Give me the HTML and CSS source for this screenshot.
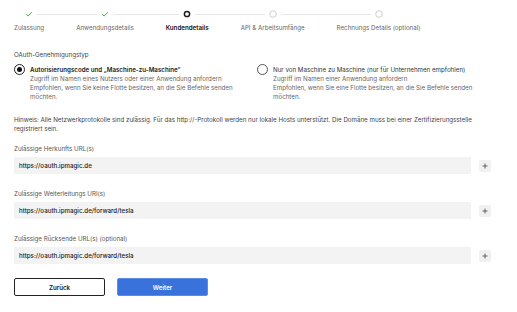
FILE: index.html
```html
<!DOCTYPE html>
<html lang="de">
  <head>
    <meta charset="UTF-8" />
    <meta name="viewport" content="width=device-width, initial-scale=1.0" />
    <title>Kundendetails</title>
    <link rel="stylesheet" href="styles.css">
  </head>
  <body>
    <div class="page">
      <ol class="stepper">
        <li class="step done">
          <div class="step-track">
            <span class="line"></span>
            <svg class="step-icon" viewBox="0 0 8 8"><path d="M1.2 4.2 L3.2 6 L6.9 2.2" fill="none" stroke="#3bb54a" stroke-width="1" /></svg>
            <span class="line"></span>
          </div>
          <span class="step-label">Zulassung</span>
        </li>
        <li class="step done">
          <div class="step-track">
            <span class="line"></span>
            <svg class="step-icon" viewBox="0 0 8 8"><path d="M1.2 4.2 L3.2 6 L6.9 2.2" fill="none" stroke="#3bb54a" stroke-width="1" /></svg>
            <span class="line"></span>
          </div>
          <span class="step-label">Anwendungsdetails</span>
        </li>
        <li class="step active">
          <div class="step-track">
            <span class="line"></span>
            <svg class="step-icon" viewBox="0 0 8 8"><circle cx="4" cy="4" r="2.6" fill="none" stroke="#1f1f1f" stroke-width="1.5" /></svg>
            <span class="line"></span>
          </div>
          <span class="step-label">Kundendetails</span>
        </li>
        <li class="step">
          <div class="step-track">
            <span class="line"></span>
            <svg class="step-icon" viewBox="0 0 8 8"><circle cx="4" cy="4" r="3.3" fill="none" stroke="#c4c4c4" stroke-width="0.8" /></svg>
            <span class="line"></span>
          </div>
          <span class="step-label">API &amp; Arbeitsumfänge</span>
        </li>
        <li class="step">
          <div class="step-track">
            <span class="line"></span>
            <svg class="step-icon" viewBox="0 0 8 8"><circle cx="4" cy="4" r="3.3" fill="none" stroke="#c4c4c4" stroke-width="0.8" /></svg>
            <span class="line"></span>
          </div>
          <span class="step-label">Rechnungs Details (optional)</span>
        </li>
      </ol>

      <p class="section-title">OAuth-Genehmigungstyp</p>
      <div class="grant-options">
        <label class="grant">
          <span class="radio checked"></span>
          <span class="grant-text">
            <span class="grant-title">Autorisierungscode und „Maschine-zu-Maschine“</span>
            <span class="grant-desc">Zugriff im Namen eines Nutzers oder einer Anwendung anfordern</span>
            <span class="grant-desc">Empfohlen, wenn Sie keine Flotte besitzen, an die Sie Befehle senden möchten.</span>
          </span>
        </label>
        <label class="grant">
          <span class="radio"></span>
          <span class="grant-text">
            <span class="grant-title light">Nur von Maschine zu Maschine (nur für Unternehmen empfohlen)</span>
            <span class="grant-desc">Zugriff im Namen einer Anwendung anfordern</span>
            <span class="grant-desc">Empfohlen, wenn Sie eine Flotte besitzen, an die Sie Befehle senden möchten.</span>
          </span>
        </label>
      </div>

      <p class="hint">Hinweis: Alle Netzwerkprotokolle sind zulässig. Für das http://-Protokoll werden nur lokale Hosts unterstützt. Die Domäne muss bei einer Zertifizierungsstelle registriert sein.</p>

      <div class="field">
        <span class="field-label">Zulässige Herkunfts URL(s)</span>
        <div class="field-row">
          <div class="url-input">https://oauth.ipmagic.de</div>
          <button class="add-button"><svg viewBox="0 0 12 12"><path d="M3.5 6 H8.5 M6 3.5 V8.5" stroke="#444" stroke-width="0.8" /></svg></button>
        </div>
      </div>
      <div class="field">
        <span class="field-label">Zulässige Weiterleitungs URI(s)</span>
        <div class="field-row">
          <div class="url-input">https://oauth.ipmagic.de/forward/tesla</div>
          <button class="add-button"><svg viewBox="0 0 12 12"><path d="M3.5 6 H8.5 M6 3.5 V8.5" stroke="#444" stroke-width="0.8" /></svg></button>
        </div>
      </div>
      <div class="field">
        <span class="field-label">Zulässige Rücksende URL(s) (optional)</span>
        <div class="field-row">
          <div class="url-input">https://oauth.ipmagic.de/forward/tesla</div>
          <button class="add-button"><svg viewBox="0 0 12 12"><path d="M3.5 6 H8.5 M6 3.5 V8.5" stroke="#444" stroke-width="0.8" /></svg></button>
        </div>
      </div>

      <div class="actions">
        <button class="btn btn-back">Zurück</button>
        <button class="btn btn-next">Weiter</button>
      </div>
    </div>
  </body>
</html>
```

FILE: styles.css
```css
body {
  margin: 0;
  background-color: #fff;
  font-family: Inter, "Liberation Sans", sans-serif;
  font-size: 6.2px;
  line-height: 9px;
  color: #333;
}
.page {
  padding: 10px 26px 0 14px;
}
.stepper {
  display: flex;
  list-style: none;
  margin: 0 0 0 -16px;
  padding: 0;
}
.step {
  display: flex;
  flex-direction: column;
  align-items: stretch;
}
.step-track {
  display: flex;
  align-items: center;
  height: 8px;
}
.step-track .line {
  flex: 1;
  height: 1px;
  background-color: #e6e6e6;
}
.step:first-child .step-track .line:first-child,
.step:last-child .step-track .line:last-child {
  visibility: hidden;
}
.step-icon {
  width: 8px;
  height: 8px;
  margin: 0 4px;
}
.step-label {
  margin-top: 5px;
  padding: 0 16px;
  text-align: center;
  color: #666;
  white-space: nowrap;
}
.step.active .step-label {
  color: #111;
  font-weight: 600;
}
.section-title {
  margin: 18px 0 0;
  color: #444;
}
.grant-options {
  display: grid;
  grid-template-columns: 1fr 1fr;
  column-gap: 9px;
  margin-top: 6px;
}
.grant {
  display: flex;
  gap: 5px;
  align-items: flex-start;
}
.radio {
  flex: none;
  box-sizing: border-box;
  width: 11px;
  height: 11px;
  margin-top: -1px;
  border: 1px solid #555;
  border-radius: 50%;
  display: flex;
  align-items: center;
  justify-content: center;
}
.radio.checked {
  border-color: #222;
}
.radio.checked::after {
  content: "";
  width: 5px;
  height: 5px;
  border-radius: 50%;
  background-color: #111;
}
.grant-text {
  display: flex;
  flex-direction: column;
}
.grant-title {
  color: #1a1a1a;
  font-weight: 600;
}
.grant-title.light {
  font-weight: 400;
  color: #333;
}
.grant-desc {
  color: #666;
}
.hint {
  margin: 15px 0 0;
  line-height: 8.5px;
  color: #444;
}
.field {
  margin-top: 11px;
}
.field + .field {
  margin-top: 15px;
}
.field-label {
  display: block;
  color: #555;
}
.field-row {
  display: flex;
  align-items: center;
  gap: 8px;
  margin-top: 4px;
}
.url-input {
  flex: 1;
  height: 17px;
  line-height: 17px;
  padding-left: 5px;
  background-color: #f3f3f3;
  border-radius: 1px;
  color: #222;
  font-weight: 500;
}
.add-button {
  width: 12px;
  height: 12px;
  padding: 0;
  border: none;
  border-radius: 2px;
  background-color: #f1f1f1;
  display: flex;
}
.add-button svg {
  width: 12px;
  height: 12px;
}
.actions {
  display: flex;
  gap: 12px;
  margin-top: 14px;
}
.btn {
  box-sizing: border-box;
  width: 91px;
  height: 18px;
  border-radius: 2px;
  font-family: inherit;
  font-size: 6.2px;
  font-weight: 600;
  cursor: pointer;
}
.btn-back {
  background-color: #fff;
  border: 1.5px solid #222;
  color: #111;
}
.btn-next {
  background-color: #3a72dc;
  border: 1px solid #5b8ce8;
  color: #fff;
}
```
